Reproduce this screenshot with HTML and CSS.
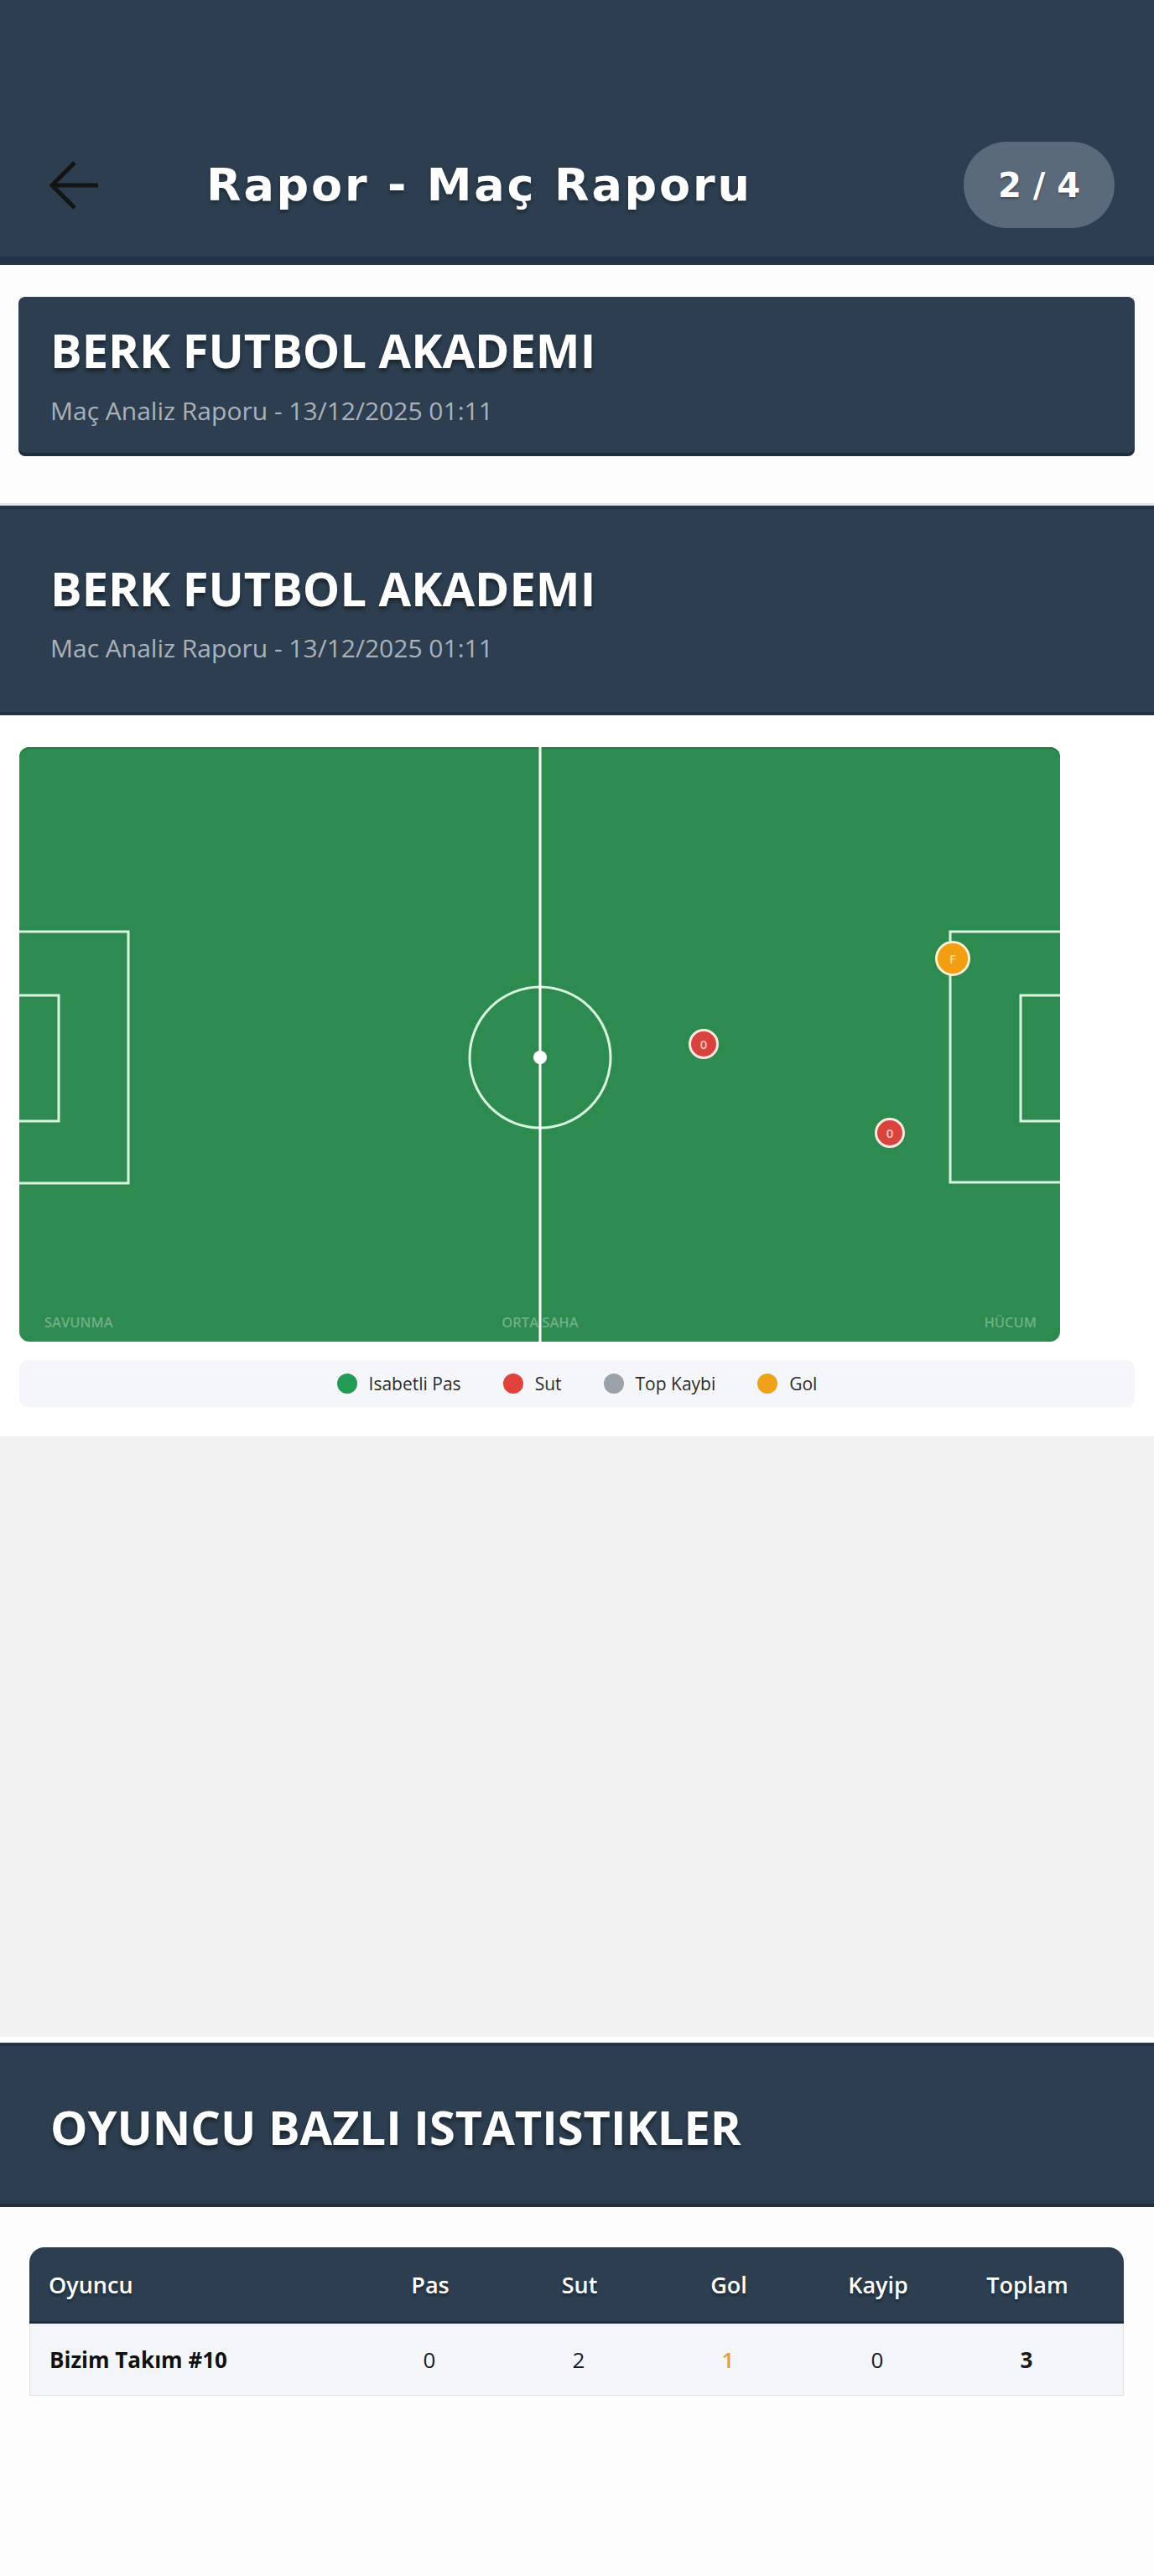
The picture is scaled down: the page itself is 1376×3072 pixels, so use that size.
FILE: index.html
```html
<!DOCTYPE html>
<html lang="tr">
<head>
<meta charset="utf-8">
<title>Rapor - Maç Raporu</title>
<link rel="stylesheet" href="styles.css">
</head>
<body>
<header class="appbar">
  <div class="appbar-row">
    <button class="back" aria-label="Geri">
      <svg width="62" height="60" viewBox="0 0 62 60"><path d="M60 30H5M32 3L5 30l27 27" fill="none" stroke="#141414" stroke-width="5"/></svg>
    </button>
    <h1 class="appbar-title">Rapor - Maç Raporu</h1>
    <div class="pager">2 / 4</div>
  </div>
</header>

<section class="intro">
  <div class="club-card">
    <h2 class="club-name">BERK FUTBOL AKADEMI</h2>
    <p class="club-sub">Maç Analiz Raporu - 13/12/2025 01:11</p>
  </div>
</section>

<section class="band">
  <h2 class="club-name">BERK FUTBOL AKADEMI</h2>
  <p class="club-sub">Mac Analiz Raporu - 13/12/2025 01:11</p>
</section>

<section class="pitch-section">
  <div class="pitch">
    <svg class="pitch-svg" width="1241" height="709" viewBox="0 0 1241 709">
      <g class="lines">
        <circle cx="621" cy="370" r="84"/>
        <rect x="-4" y="220" width="134" height="300"/>
        <rect x="-4" y="296" width="51" height="150"/>
        <rect x="1110" y="220" width="135" height="299"/>
        <rect x="1194" y="296" width="51" height="150"/>
      </g>
      <line class="midline" x1="621" y1="0" x2="621" y2="709"/>
      <circle cx="621" cy="370" r="8" fill="#ffffff"/>
      <g class="zones">
        <text x="30" y="692">SAVUNMA</text>
        <text x="621" y="692" text-anchor="middle">ORTA SAHA</text>
        <text x="1213" y="692" text-anchor="end">HÜCUM</text>
      </g>
      <g class="marker">
        <circle cx="1113" cy="252" r="19.5" fill="#f29d12" stroke="#fbf1cf" stroke-width="3"/>
        <text x="1113" y="258" class="mk-gold">F</text>
      </g>
      <g class="marker">
        <circle cx="816" cy="354" r="16.5" fill="#d8433d" stroke="#fbe8e2" stroke-width="3"/>
        <text x="816" y="360" class="mk-red">0</text>
      </g>
      <g class="marker">
        <circle cx="1038" cy="460" r="16.5" fill="#d8433d" stroke="#fbe8e2" stroke-width="3"/>
        <text x="1038" y="466" class="mk-red">0</text>
      </g>
    </svg>
  </div>
  <div class="legend">
    <div class="legend-item"><span class="dot dot-green"></span>Isabetli Pas</div>
    <div class="legend-item"><span class="dot dot-red"></span>Sut</div>
    <div class="legend-item"><span class="dot dot-gray"></span>Top Kaybi</div>
    <div class="legend-item"><span class="dot dot-gold"></span>Gol</div>
  </div>
</section>

<section class="blank"></section>

<section class="band band-stats">
  <h2 class="club-name">OYUNCU BAZLI ISTATISTIKLER</h2>
</section>

<section class="stats">
  <div class="table">
    <div class="thead">
      <div class="cell cell-name">Oyuncu</div>
      <div class="cell">Pas</div>
      <div class="cell">Sut</div>
      <div class="cell">Gol</div>
      <div class="cell">Kayip</div>
      <div class="cell">Toplam</div>
    </div>
    <div class="trow">
      <div class="cell cell-name">Bizim Takım #10</div>
      <div class="cell">0</div>
      <div class="cell">2</div>
      <div class="cell cell-goal">1</div>
      <div class="cell">0</div>
      <div class="cell cell-total">3</div>
    </div>
  </div>
</section>
</body>
</html>
```

FILE: styles.css
```css
* { box-sizing: border-box; }

html, body {
  margin: 0;
  padding: 0;
  background: #fdfdfd;
  font-family: "Open Sans", "Noto Sans", sans-serif;
}

/* App bar */
.appbar {
  background: #2c3e50;
  padding: 169px 47px 34px 52px;
  border-bottom: 10px solid #233447;
}
.appbar-row {
  display: flex;
  align-items: center;
  height: 103px;
}
.back {
  width: 72px;
  height: 72px;
  padding: 0;
  border: 0;
  background: transparent;
  display: flex;
  align-items: center;
  justify-content: center;
}
.appbar-title {
  margin: 0 0 0 122px;
  color: #ffffff;
  font-family: "DejaVu Sans", sans-serif;
  font-weight: 700;
  font-size: 54px;
  letter-spacing: 2.8px;
  line-height: 1;
  text-shadow: 0 3px 4px rgba(0, 0, 0, 0.35);
}
.pager {
  margin-left: auto;
  height: 103px;
  padding: 0 41px;
  border-radius: 52px;
  background: #5b6a7a;
  color: #ffffff;
  font-family: "DejaVu Sans", sans-serif;
  font-weight: 700;
  font-size: 40px;
  display: flex;
  align-items: center;
  text-shadow: 0 2px 3px rgba(0, 0, 0, 0.3);
}

/* Shared headings */
.club-name {
  margin: 0;
  color: #ffffff;
  font-weight: 700;
  font-size: 56px;
  line-height: 66px;
  text-shadow: 0 4px 4px rgba(0, 0, 0, 0.4);
}
.club-sub {
  margin: 20px 0 0;
  color: rgba(255, 255, 255, 0.62);
  font-size: 30px;
  line-height: 40px;
}

/* Intro card */
.intro {
  background: #fdfdfd;
  padding: 38px 23px 60px 22px;
  border-bottom: 3px solid #e2e5e9;
}
.club-card {
  background: #2c3e50;
  border-radius: 8px;
  padding: 30px 38px 30px 38px;
  box-shadow: 0 4px 0 #1f2e3d;
}

/* Bands */
.band {
  background: #2c3e50;
  border-top: 4px solid #233345;
  border-bottom: 4px solid #223243;
  padding: 61px 60px 56px;
}
.band .club-sub { margin-top: 19px; }

.band-stats {
  padding: 63px 60px 59px;
}

/* Pitch */
.pitch-section {
  background: #ffffff;
  padding: 38px 23px 35px 23px;
}
.pitch {
  width: 1241px;
  height: 709px;
  background: #2e8b50;
  border-radius: 12px;
  overflow: hidden;
  box-shadow: inset 0 2px 0 #24793f;
}
.pitch-svg { display: block; }
.lines {
  fill: none;
  stroke: #d8f6df;
  stroke-width: 3;
}
.midline {
  stroke: #ffffff;
  stroke-width: 3;
}
.zones text {
  font-family: "Open Sans", sans-serif;
  font-weight: 600;
  font-size: 16.5px;
  fill: rgba(255, 255, 255, 0.33);
}
.mk-gold, .mk-red {
  font-family: "Open Sans", sans-serif;
  font-size: 15px;
  font-weight: 600;
  text-anchor: middle;
}
.mk-gold { fill: #fbd79a; }
.mk-red { fill: #f6c4bd; }

/* Legend */
.legend {
  margin-top: 22px;
  height: 56px;
  background: #f4f6f9;
  border-radius: 10px;
  display: flex;
  align-items: center;
  justify-content: center;
  gap: 50px;
}
.legend-item {
  display: flex;
  align-items: center;
  gap: 14px;
  font-size: 21px;
  color: #2b2b2b;
}
.dot {
  width: 24px;
  height: 24px;
  border-radius: 50%;
  display: block;
}
.dot-green { background: #239a55; }
.dot-red { background: #e0433b; }
.dot-gray { background: #9aa1a8; }
.dot-gold { background: #eea21a; }

/* Blank gray area */
.blank {
  height: 723px;
  background: #f2f2f2;
  border-bottom: 7px solid #ffffff;
}

/* Stats table */
.stats {
  background: #fdfdfd;
  padding: 48px 36px 0 35px;
}
.table {
  width: 1305px;
}
.thead, .trow {
  display: grid;
  grid-template-columns: 1fr repeat(5, 178px);
  align-items: center;
  padding: 0 26px 0 23px;
}
.thead {
  height: 91px;
  background: #2c3e50;
  border-radius: 18px 18px 0 0;
  color: #ffffff;
  font-weight: 600;
  font-size: 27px;
  text-shadow: 0 3px 3px rgba(0, 0, 0, 0.35);
  border-bottom: 3px solid #1f2e3d;
}
.trow {
  height: 86px;
  background: #f3f5f8;
  border: 1px solid #dde1e5;
  border-top: 0;
  color: #1a1a1a;
  font-size: 26px;
}
.cell { text-align: center; }
.cell-name { text-align: left; }
.trow .cell-name { font-weight: 700; color: #111; }
.cell-goal { color: #e3a12f; font-weight: 600; }
.cell-total { font-weight: 700; }
```
